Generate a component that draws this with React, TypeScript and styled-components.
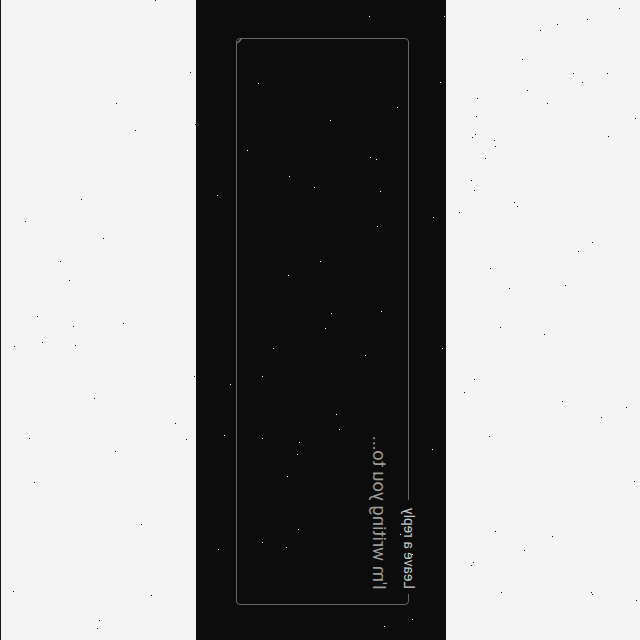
import React from "react";
import styled, { createGlobalStyle } from "styled-components";

const Global = createGlobalStyle`
  html, body { margin: 0; padding: 0; }
  body {
    background: #f3f3f3;
    font-family: Roboto, "Liberation Sans", sans-serif;
    overflow: hidden;
  }
`;

const Page = styled.div`
  position: relative;
  width: 640px;
  height: 640px;
  display: grid;
  grid-template-columns: 196px 250px 1fr;
  background: #f3f3f3;
  box-shadow: inset 1px 0 0 #141414;
`;

const Panel = styled.div`
  grid-column: 2;
  background: #0c0c0c;
  display: flex;
  align-items: center;
  justify-content: center;
`;

const Field = styled.div`
  position: relative;
  flex: none;
  width: 567px;
  height: 173px;
  margin: 3px 0 0 3px;
  transform: matrix(0, -1, -1, 0, 0, 0);
  transform-origin: center;

  &::after {
    content: "";
    position: absolute;
    right: 0;
    bottom: 3px;
    width: 6px;
    height: 1px;
    background: #8a8a8a;
    transform: rotate(-45deg);
    pointer-events: none;
  }
`;

const Input = styled.textarea`
  box-sizing: border-box;
  display: block;
  width: 100%;
  height: 100%;
  margin: 0;
  padding: 16px 14px;
  background: transparent;
  border: 1px solid #666666;
  border-radius: 4px;
  resize: none;
  outline: none;
  color: #e0e0e0;
  font-family: Roboto, "Liberation Sans", sans-serif;
  font-size: 18.5px;
  line-height: 1.4375em;

  &::placeholder {
    color: #9a9a9a;
    opacity: 1;
  }
`;

const Label = styled.label`
  position: absolute;
  top: 0;
  left: 11px;
  transform: translateY(-50%);
  padding: 0 8px 0 5px;
  background: #0c0c0c;
  color: #c6c6c6;
  font-family: Roboto, "Liberation Sans", sans-serif;
  font-size: 14px;
  line-height: 1;
  white-space: nowrap;
`;

const Sky = styled.svg`
  position: absolute;
  inset: 0;
  pointer-events: none;
`;

const light: [number, number][] = [
  [155, 0], [190, 72], [116, 103], [135, 130], [195, 124], [81, 199], [25, 221], [103, 238], [60, 261], [69, 280], [37, 316],
  [619, 8], [557, 24], [587, 19], [540, 30], [522, 59], [573, 73], [607, 73], [582, 82], [527, 90], [477, 98], [547, 103],
  [476, 116], [635, 118], [475, 134], [472, 137], [494, 140], [495, 146], [608, 136], [485, 158], [471, 180], [474, 190],
  [514, 202], [517, 206], [459, 212], [592, 242], [578, 251], [490, 268], [565, 285], [509, 288],
  [73, 326], [123, 323], [14, 346], [42, 342], [75, 345], [94, 398], [175, 423], [29, 438], [186, 439], [115, 451],
  [34, 482], [141, 524], [13, 591], [151, 595], [99, 620], [97, 628], [194, 376],
  [500, 327], [544, 334], [474, 379], [464, 392], [562, 401], [626, 407], [601, 417], [489, 436], [634, 481], [495, 531],
  [552, 536], [524, 550], [473, 562], [471, 565], [501, 592], [591, 592], [592, 594], [636, 600],
];

const dark: [number, number][] = [
  [258, 83], [247, 150], [289, 176], [314, 187], [217, 195], [288, 275],
  [369, 16], [444, 16], [440, 82], [397, 107], [330, 120], [370, 157], [376, 159], [380, 191], [433, 217], [377, 226],
  [320, 261], [331, 313], [381, 311],
  [273, 348], [262, 376], [230, 384], [224, 435], [262, 438], [299, 442], [297, 454], [287, 476], [298, 529], [262, 542],
  [286, 547], [218, 549],
  [325, 328], [365, 355], [442, 348], [336, 414], [339, 429], [432, 449], [400, 534], [412, 554], [412, 619], [384, 626],
];

export default function App() {
  return (
    <>
      <Global />
      <Page>
        <Panel>
          <Field>
            <Input id="reply" placeholder="I'm writing you to..." />
            <Label htmlFor="reply">Leave a reply</Label>
          </Field>
        </Panel>
        <Sky width="640" height="640" viewBox="0 0 640 640">
          {light.map(([x, y], i) => (
            <rect key={"l" + i} x={x} y={y} width="1" height="1" fill="#111" />
          ))}
          {dark.map(([x, y], i) => (
            <rect key={"d" + i} x={x} y={y} width="1" height="1" fill="#fff" />
          ))}
        </Sky>
      </Page>
    </>
  );
}
